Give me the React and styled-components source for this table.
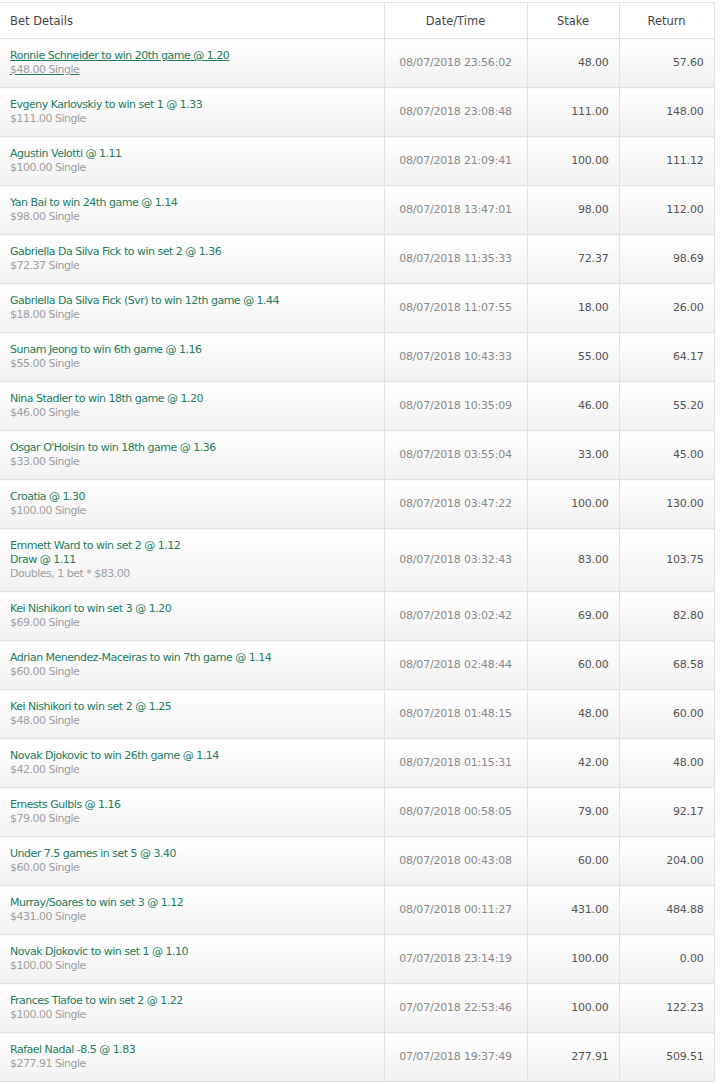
import styled, { createGlobalStyle } from 'styled-components'

const GlobalStyle = createGlobalStyle`
  body {
    margin: 0;
    background: #fff;
    font-family: 'DejaVu Sans', Verdana, sans-serif;
  }
`

const bets = [
  { lines: ['Ronnie Schneider to win 20th game @ 1.20'], sub: '$48.00 Single', date: '08/07/2018 23:56:02', stake: '48.00', ret: '57.60', hover: true },
  { lines: ['Evgeny Karlovskiy to win set 1 @ 1.33'], sub: '$111.00 Single', date: '08/07/2018 23:08:48', stake: '111.00', ret: '148.00' },
  { lines: ['Agustin Velotti @ 1.11'], sub: '$100.00 Single', date: '08/07/2018 21:09:41', stake: '100.00', ret: '111.12' },
  { lines: ['Yan Bai to win 24th game @ 1.14'], sub: '$98.00 Single', date: '08/07/2018 13:47:01', stake: '98.00', ret: '112.00' },
  { lines: ['Gabriella Da Silva Fick to win set 2 @ 1.36'], sub: '$72.37 Single', date: '08/07/2018 11:35:33', stake: '72.37', ret: '98.69' },
  { lines: ['Gabriella Da Silva Fick (Svr) to win 12th game @ 1.44'], sub: '$18.00 Single', date: '08/07/2018 11:07:55', stake: '18.00', ret: '26.00' },
  { lines: ['Sunam Jeong to win 6th game @ 1.16'], sub: '$55.00 Single', date: '08/07/2018 10:43:33', stake: '55.00', ret: '64.17' },
  { lines: ['Nina Stadler to win 18th game @ 1.20'], sub: '$46.00 Single', date: '08/07/2018 10:35:09', stake: '46.00', ret: '55.20' },
  { lines: ["Osgar O'Hoisin to win 18th game @ 1.36"], sub: '$33.00 Single', date: '08/07/2018 03:55:04', stake: '33.00', ret: '45.00' },
  { lines: ['Croatia @ 1.30'], sub: '$100.00 Single', date: '08/07/2018 03:47:22', stake: '100.00', ret: '130.00' },
  { lines: ['Emmett Ward to win set 2 @ 1.12', 'Draw @ 1.11'], sub: 'Doubles, 1 bet * $83.00', date: '08/07/2018 03:32:43', stake: '83.00', ret: '103.75' },
  { lines: ['Kei Nishikori to win set 3 @ 1.20'], sub: '$69.00 Single', date: '08/07/2018 03:02:42', stake: '69.00', ret: '82.80' },
  { lines: ['Adrian Menendez-Maceiras to win 7th game @ 1.14'], sub: '$60.00 Single', date: '08/07/2018 02:48:44', stake: '60.00', ret: '68.58' },
  { lines: ['Kei Nishikori to win set 2 @ 1.25'], sub: '$48.00 Single', date: '08/07/2018 01:48:15', stake: '48.00', ret: '60.00' },
  { lines: ['Novak Djokovic to win 26th game @ 1.14'], sub: '$42.00 Single', date: '08/07/2018 01:15:31', stake: '42.00', ret: '48.00' },
  { lines: ['Ernests Gulbis @ 1.16'], sub: '$79.00 Single', date: '08/07/2018 00:58:05', stake: '79.00', ret: '92.17' },
  { lines: ['Under 7.5 games in set 5 @ 3.40'], sub: '$60.00 Single', date: '08/07/2018 00:43:08', stake: '60.00', ret: '204.00' },
  { lines: ['Murray/Soares to win set 3 @ 1.12'], sub: '$431.00 Single', date: '08/07/2018 00:11:27', stake: '431.00', ret: '484.88' },
  { lines: ['Novak Djokovic to win set 1 @ 1.10'], sub: '$100.00 Single', date: '07/07/2018 23:14:19', stake: '100.00', ret: '0.00' },
  { lines: ['Frances Tiafoe to win set 2 @ 1.22'], sub: '$100.00 Single', date: '07/07/2018 22:53:46', stake: '100.00', ret: '122.23' },
  { lines: ['Rafael Nadal -8.5 @ 1.83'], sub: '$277.91 Single', date: '07/07/2018 19:37:49', stake: '277.91', ret: '509.51' },
]

const Wrap = styled.div`
  padding-top: 2px;
  width: 714px;
`

const Table = styled.table`
  width: 714px;
  border-collapse: collapse;
  table-layout: fixed;
  font-size: 11px;
  border-top: 1px solid #e2e2e2;
  border-right: 1px solid #e2e2e2;
`

const Th = styled.th`
  height: 35px;
  padding: 0 10px;
  font-weight: normal;
  font-size: 11.5px;
  color: #444;
  background: #fff;
  text-align: ${(p) => (p.$left ? 'left' : 'center')};
  border-bottom: 1px solid #e2e2e2;
  border-left: ${(p) => (p.$left ? 'none' : '1px solid #e2e2e2')};
`

const Td = styled.td`
  padding: 10px;
  line-height: 14px;
  vertical-align: middle;
  background: linear-gradient(#fff, #f1f1f1);
  border-bottom: 1px solid #e2e2e2;
  border-left: ${(p) => (p.$first ? 'none' : '1px solid #e2e2e2')};
  text-align: ${(p) => p.$align || 'left'};
  color: ${(p) => p.$color || '#555'};
  letter-spacing: ${(p) => (p.$first ? '-0.5px' : '-0.2px')};
`

const Selection = styled.div`
  color: #237c5e;
  text-decoration: ${(p) => (p.$hover ? 'underline' : 'none')};
`

const Sub = styled.div`
  color: #a0a0a0;
  text-decoration: ${(p) => (p.$hover ? 'underline' : 'none')};
  text-decoration-color: #237c5e;
  display: inline-block;
`

export default function App() {
  return (
    <Wrap>
      <GlobalStyle />
      <Table>
        <colgroup>
          <col style={{ width: 384 }} />
          <col style={{ width: 143 }} />
          <col style={{ width: 92 }} />
          <col style={{ width: 95 }} />
        </colgroup>
        <thead>
          <tr>
            <Th $left>Bet Details</Th>
            <Th>Date/Time</Th>
            <Th>Stake</Th>
            <Th>Return</Th>
          </tr>
        </thead>
        <tbody>
          {bets.map((b) => (
            <tr key={b.date}>
              <Td $first>
                {b.lines.map((l) => (
                  <Selection key={l} $hover={b.hover}>{l}</Selection>
                ))}
                <Sub $hover={b.hover}>{b.sub}</Sub>
              </Td>
              <Td $align='center' $color='#8a8a8a'>{b.date}</Td>
              <Td $align='right'>{b.stake}</Td>
              <Td $align='right'>{b.ret}</Td>
            </tr>
          ))}
        </tbody>
      </Table>
    </Wrap>
  )
}
